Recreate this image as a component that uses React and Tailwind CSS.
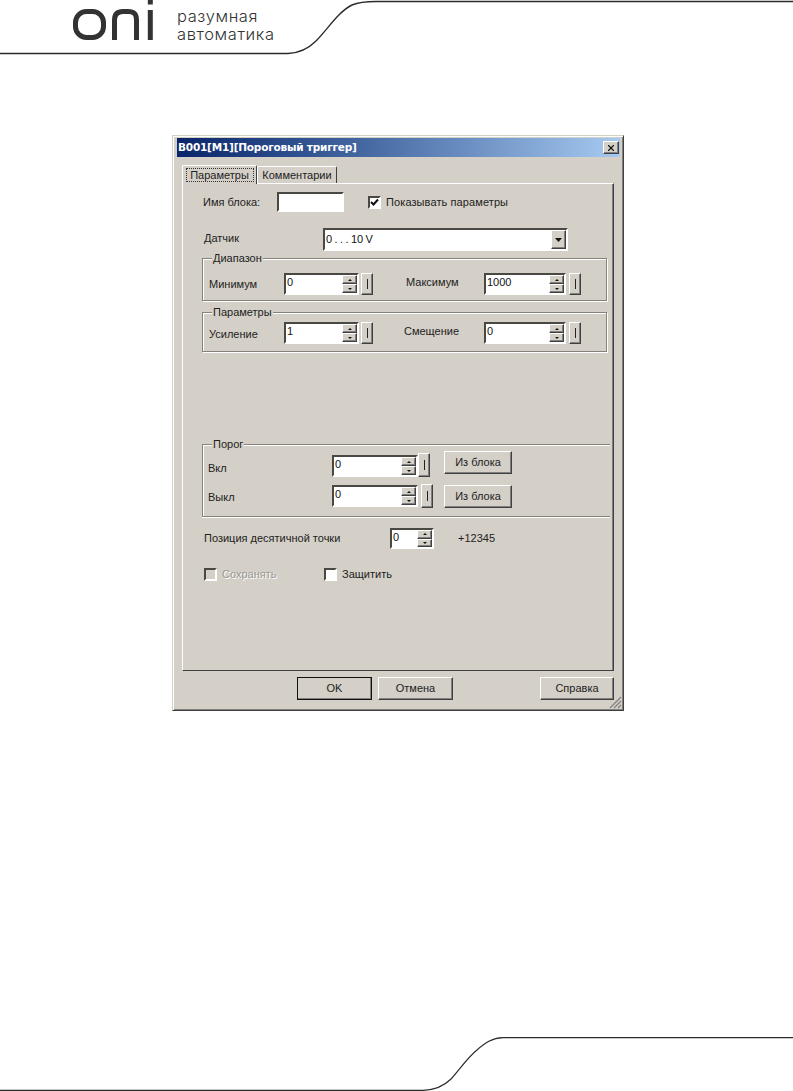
import { X } from 'lucide-react';

const raised = 'border border-t-white border-l-white border-r-[#404040] border-b-[#404040] shadow-[inset_-1px_-1px_0_#808080] bg-[#d4d0c8]';
const sunken = 'border-2 border-t-[#4a4843] border-l-[#4a4843] border-r-white border-b-white bg-white';

const Arrow = ({ up, size = 5 }) => (
  <svg width={size} height={Math.ceil(size / 2)} viewBox="0 0 6 3" preserveAspectRatio="none">
    <path d={up ? 'M3 0L6 3H0Z' : 'M0 0H6L3 3Z'} fill="#111" />
  </svg>
);

const Spin = () => (
  <div className="flex flex-col w-[15px] h-full">
    <div className={`${raised} flex-1 flex items-center justify-center`}><Arrow up size={4} /></div>
    <div className={`${raised} flex-1 flex items-center justify-center`}><Arrow size={4} /></div>
  </div>
);

const NumberBox = ({ value, className = '' }) => (
  <div className={`${sunken} flex justify-between ${className}`}>
    <span className="pl-px leading-[15px] text-[#111]">{value}</span>
    <Spin />
  </div>
);

const PinButton = ({ className = '' }) => (
  <div className={`${raised} w-[12px] flex items-center justify-center ${className}`}>
    <div className="w-px h-[10px] bg-[#222]" />
  </div>
);

const Button = ({ children, className = '' }) => (
  <div className={`${raised} flex items-center justify-center ${className}`}>{children}</div>
);

const Checkbox = ({ checked, disabled }) => (
  <div className={`border-2 border-t-[#4a4843] border-l-[#4a4843] border-r-white border-b-white w-[13px] h-[13px] flex items-center justify-center ${disabled ? 'bg-[#d4d0c8]' : 'bg-white'}`}>
    {checked && (
      <svg width="9" height="9" viewBox="0 0 9 9">
        <path d="M1 4L3.5 6.5L8 1.5" fill="none" stroke="#111" strokeWidth="2" />
      </svg>
    )}
  </div>
);

const Legend = ({ children }) => (
  <legend className="ml-[9px] px-px bg-[#d4d0c8] leading-[13px] text-[#222]">{children}</legend>
);

const groupBox = 'border border-[#85827c] shadow-[1px_1px_0_#fff,inset_1px_1px_0_#fff]';

const Header = () => (
  <header className="relative h-[56px] shrink-0">
    <svg className="absolute inset-0" width="793" height="56" viewBox="0 0 793 56">
      <path d="M0 53.5H288C300 53 308 49 316 41C328 29 338 12 352 5C359 2 366 1.5 376 1.5H793" fill="none" stroke="#2b2b2b" strokeWidth="1.4" />
    </svg>
    <div className="relative flex pl-[73px]">
      <svg width="81" height="41" viewBox="0 0 81 41" fill="none" stroke="#333" strokeWidth="5">
        <rect x="2.5" y="11.5" width="28" height="26" rx="11" />
        <path d="M41.5 40V20C41.5 14 45 11.5 50 11.5H55C61 11.5 63.5 14 63.5 20V40" />
        <path d="M77.3 10V40" />
        <path d="M77.3 0V4.5" />
      </svg>
      <div className="ml-[23px] mt-[7px] text-[16.5px] leading-[18px] tracking-[0.6px] font-light text-[#333] font-['Inter',sans-serif]">
        <div>разумная</div>
        <div>автоматика</div>
      </div>
    </div>
  </header>
);

const Footer = () => (
  <footer className="mt-auto h-[54px] shrink-0">
    <svg className="block" width="793" height="54" viewBox="0 0 793 54">
      <path d="M0 53.3H423C435 53 444 49 451 42C460 32 468 20 477 13C485 6 492 1 503 0.7H793" fill="none" stroke="#2b2b2b" strokeWidth="1.2" />
    </svg>
  </footer>
);

const Dialog = () => (
  <section className="relative ml-[172px] mt-[79px] w-[452px] h-[576px] shrink-0 border border-t-[#d4d0c8] border-l-[#d4d0c8] border-r-[#404040] border-b-[#404040] shadow-[inset_1px_1px_0_#fff,inset_-1px_-1px_0_#808080] bg-[#d4d0c8] text-[11px] text-[#222] antialiased font-['Liberation_Sans',sans-serif]">
    <div className="ml-[4px] mr-[3px] mt-[2px] h-[19px] pl-[1px] pr-[1px] flex items-center justify-between bg-gradient-to-r from-[#0a246a] to-[#a6caf0]">
      <span className="text-white font-bold text-[10.5px] font-['DejaVu_Sans',sans-serif] tracking-[-0.2px]">B001[M1][Пороговый триггер]</span>
      <div className={`${raised} w-[16px] h-[13px] flex items-center justify-center`}>
        <X size={10} strokeWidth={2.6} color="#111" />
      </div>
    </div>

    <div className="flex items-end pl-[9px] mt-[7px] h-[19px]">
      <div className="relative z-10 -mb-px h-[19px] w-[75px] bg-[#d4d0c8] border-t border-l border-t-white border-l-white border-r border-r-[#404040] rounded-t-[2px] flex items-center justify-center">
        <span className="border border-dotted border-[#333] w-[68px] h-[14px] flex items-center justify-center">Параметры</span>
      </div>
      <div className="h-[17px] w-[80px] border-t border-l border-t-white border-l-white border-r border-r-[#404040] rounded-t-[2px] flex items-center justify-center">
        Комментарии
      </div>
    </div>

    <div className="ml-[9px] w-[432px] h-[488px] border border-t-white border-l-white border-r-[#404040] border-b-[#404040] shadow-[inset_-1px_0_0_#808080]">
      <div className="flex items-center mt-[8px] pl-[20px]">
        <span className="w-[74px]">Имя блока:</span>
        <div className={`${sunken} w-[67px] h-[20px]`} />
        <div className="ml-[24px]"><Checkbox checked /></div>
        <span className="ml-[5px] tracking-[0.1px]">Показывать параметры</span>
      </div>

      <div className="flex items-center mt-[16px] pl-[21px]">
        <span className="w-[119px] mb-[3px]">Датчик</span>
        <div className={`${sunken} w-[245px] h-[23px] flex justify-between items-stretch`}>
          <span className="pl-[1px] leading-[18px] tracking-[-0.3px] text-[#111]">0 . . . 10 V</span>
          <div className={`${raised} w-[15px] flex items-center justify-center`}><Arrow size={7} /></div>
        </div>
      </div>

      <fieldset className={`${groupBox} ml-[19px] mt-[1px] w-[405px] h-[49px]`}>
        <Legend>Диапазон</Legend>
        <div className="flex items-center pt-[8px] pl-[6px]">
          <span className="w-[75px]">Минимум</span>
          <NumberBox value="0" className="w-[75px] h-[22px]" />
          <PinButton className="ml-[2px] h-[22px]" />
          <span className="ml-[33px] w-[78px] mb-[4px]">Максимум</span>
          <NumberBox value="1000" className="w-[82px] h-[22px]" />
          <PinButton className="ml-[3px] h-[22px]" />
        </div>
      </fieldset>

      <fieldset className={`${groupBox} ml-[19px] mt-[5px] w-[405px] h-[46px]`}>
        <Legend>Параметры</Legend>
        <div className="flex items-center pt-[3px] pl-[6px]">
          <span className="w-[75px] mt-[2px]">Усиление</span>
          <NumberBox value="1" className="w-[75px] h-[22px]" />
          <PinButton className="ml-[2px] h-[22px]" />
          <span className="ml-[31px] w-[80px] mb-[4px]">Смещение</span>
          <NumberBox value="0" className="w-[82px] h-[22px]" />
          <PinButton className="ml-[3px] h-[22px]" />
        </div>
      </fieldset>

      {/* open on the right side, only top, left and bottom rules */}
      <fieldset className="border-t border-l border-b border-[#85827c] shadow-[0_1px_0_#fff,inset_1px_1px_0_#fff] ml-[19px] mt-[86px] w-[408px] h-[79px]">
        <Legend>Порог</Legend>
        <div className="flex items-start pl-[5px]">
          <span className="w-[124px] mt-[9px]">Вкл</span>
          <NumberBox value="0" className="w-[86px] h-[22px] mt-[4px]" />
          <PinButton className="h-[24px] mt-[2px]" />
          <Button className="ml-[14px] w-[68px] h-[23px]">Из блока</Button>
        </div>
        <div className="flex items-start pl-[5px] mt-[7px]">
          <span className="w-[124px] mt-[5px]">Выкл</span>
          <NumberBox value="0" className="w-[86px] h-[22px] mt-[1px]" />
          <PinButton className="ml-[3px] h-[24px]" />
          <Button className="ml-[11px] w-[68px] h-[23px] mt-[1px]">Из блока</Button>
        </div>
      </fieldset>

      <div className="flex items-center mt-[11px] pl-[21px]">
        <span className="w-[186px]">Позиция десятичной точки</span>
        <NumberBox value="0" className="w-[44px] h-[21px]" />
        <span className="ml-[24px]">+12345</span>
      </div>

      <div className="flex items-center mt-[17px] pl-[21px]">
        <Checkbox disabled />
        <span className="ml-[5px] w-[102px] text-[#9b9891] [text-shadow:1px_1px_0_#fff]">Сохранять</span>
        <Checkbox />
        <span className="ml-[5px]">Защитить</span>
      </div>
    </div>

    <div className="flex mt-[6px] ml-[124px]">
      <Button className="w-[75px] h-[23px] outline outline-1 -outline-offset-1 outline-[#111]">OK</Button>
      <Button className="ml-[6px] w-[75px] h-[23px]">Отмена</Button>
      <Button className="ml-[87px] w-[74px] h-[23px]">Справка</Button>
    </div>

    <svg className="absolute right-[1px] bottom-[1px]" width="13" height="13" viewBox="0 0 13 13">
      <path d="M12 1L1 12M12 5L5 12M12 9L9 12" stroke="#808080" strokeWidth="1.2" />
    </svg>
  </section>
);

export default function App() {
  return (
    <div className="w-[793px] h-[1091px] bg-white flex flex-col overflow-hidden">
      <Header />
      <Dialog />
      <Footer />
    </div>
  );
}
